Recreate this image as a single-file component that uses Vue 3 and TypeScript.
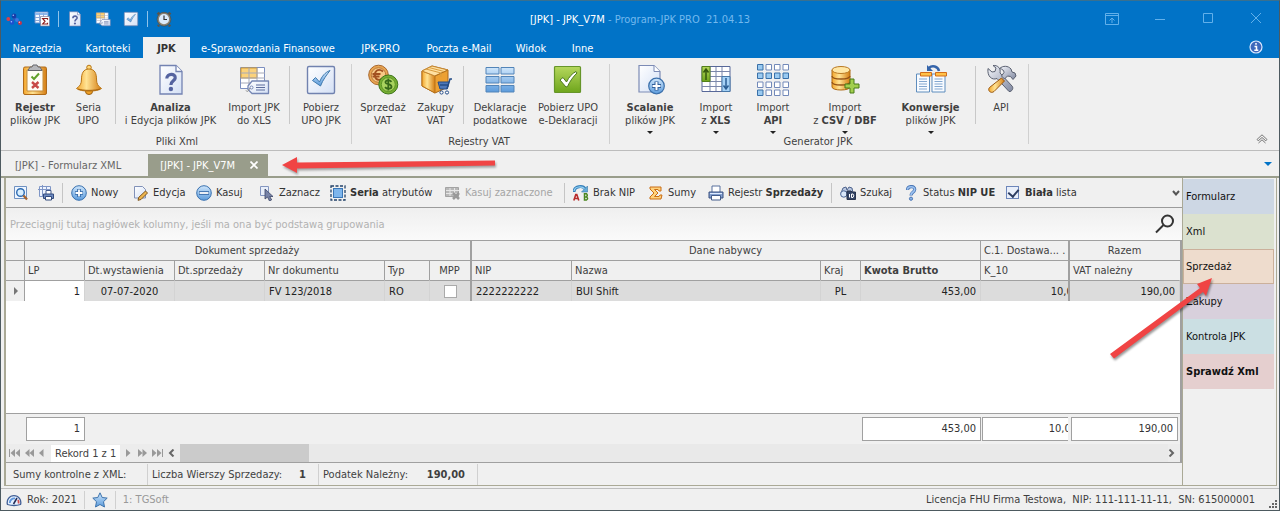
<script setup lang="ts">
import { ref } from 'vue'

interface Run { text: string; bold?: boolean }
interface RibbonItem { icon?: string; lines?: Run[][]; width?: number; menu?: boolean; separator?: boolean }
interface RibbonGroup { caption: string; items: RibbonItem[] }
interface ToolItem { icon?: string; text?: Run[]; width?: number; disabled?: boolean; separator?: boolean; label?: string }

const quick = [
  { icon: 'molecule', width: 28, label: 'Menu' },
  { icon: 'sumtable', width: 24, label: 'Sumy' },
  { separator: true },
  { icon: 'docq', width: 28, label: 'Analiza' },
  { icon: 'tabletag', width: 28, label: 'Import' },
  { icon: 'checkbox', width: 24, label: 'UPO' },
  { separator: true },
  { icon: 'clock', width: 34, label: 'Zegar' },
]

const menu = [
  { text: 'Narzędzia', width: 72 },
  { text: 'Kartoteki', width: 70 },
  { text: 'JPK', width: 47 },
  { text: 'e-Sprawozdania Finansowe', width: 156 },
  { text: 'JPK-PRO', width: 69 },
  { text: 'Poczta e-Mail', width: 88 },
  { text: 'Widok', width: 56 },
  { text: 'Inne', width: 47 },
]
const activeMenu = ref('JPK')

const groups: RibbonGroup[] = [
  {
    caption: 'Pliki Xml',
    items: [
      { icon: 'clipboard', width: 60, lines: [[{ text: 'Rejestr', bold: true }], [{ text: 'plików JPK' }]] },
      { icon: 'bell', width: 47, lines: [[{ text: 'Seria' }], [{ text: 'UPO' }]] },
      { separator: true },
      { icon: 'docq', width: 103, lines: [[{ text: 'Analiza', bold: true }], [{ text: 'i Edycja plików JPK' }]] },
      { icon: 'tabletag', width: 64, lines: [[{ text: 'Import JPK' }], [{ text: 'do XLS' }]] },
      { separator: true },
      { icon: 'checkbox', width: 56, lines: [[{ text: 'Pobierz' }], [{ text: 'UPO JPK' }]] },
    ],
  },
  {
    caption: 'Rejestry VAT',
    items: [
      { icon: 'coins', width: 56, lines: [[{ text: 'Sprzedaż' }], [{ text: 'VAT' }]] },
      { icon: 'boxcart', width: 49, lines: [[{ text: 'Zakupy' }], [{ text: 'VAT' }]] },
      { separator: true },
      { icon: 'bluegrid', width: 66, lines: [[{ text: 'Deklaracje' }], [{ text: 'podatkowe' }]] },
      { icon: 'greencheck', width: 70, lines: [[{ text: 'Pobierz UPO' }], [{ text: 'e-Deklaracji' }]] },
    ],
  },
  {
    caption: 'Generator JPK',
    items: [
      { icon: 'docplus', width: 74, menu: true, lines: [[{ text: 'Scalanie', bold: true }], [{ text: 'plików JPK' }]] },
      { icon: 'xlsgrid', width: 58, menu: true, lines: [[{ text: 'Import' }], [{ text: 'z ' }, { text: 'XLS', bold: true }]] },
      { icon: 'squares', width: 56, menu: true, lines: [[{ text: 'Import' }], [{ text: 'API', bold: true }]] },
      { icon: 'database', width: 88, menu: true, lines: [[{ text: 'Import' }], [{ text: 'z ' }, { text: 'CSV / DBF', bold: true }]] },
      { icon: 'convert', width: 83, menu: true, lines: [[{ text: 'Konwersje', bold: true }], [{ text: 'plików JPK' }]] },
      { separator: true },
      { icon: 'tools', width: 44, lines: [[{ text: 'API' }]] },
    ],
  },
]

const tools: ToolItem[] = [
  { icon: 'preview', width: 25, label: 'Podgląd' },
  { icon: 'gridprint', width: 24, label: 'Drukuj' },
  { separator: true },
  { icon: 'plus', width: 62, text: [{ text: 'Nowy' }] },
  { icon: 'edit', width: 63, text: [{ text: 'Edycja' }] },
  { icon: 'minus', width: 63, text: [{ text: 'Kasuj' }] },
  { icon: 'cursor', width: 71, text: [{ text: 'Zaznacz' }] },
  { icon: 'select', width: 115, text: [{ text: 'Seria', bold: true }, { text: ' atrybutów' }] },
  { icon: 'deltable', width: 119, disabled: true, text: [{ text: 'Kasuj zaznaczone' }] },
  { separator: true },
  { icon: 'ab', width: 75, text: [{ text: 'Brak NIP' }] },
  { icon: 'sigma', width: 60, text: [{ text: 'Sumy' }] },
  { icon: 'printer', width: 123, text: [{ text: 'Rejestr ' }, { text: 'Sprzedaży', bold: true }] },
  { separator: true },
  { icon: 'find', width: 63, text: [{ text: 'Szukaj' }] },
  { icon: 'question', width: 103, text: [{ text: 'Status ' }, { text: 'NIP UE', bold: true }] },
]

const whiteList = ref(true)
const mpp = ref(false)
const columns = [19, 60, 90, 90, 120, 45, 42, 100, 0, 40, 120, 89, 110]
const side = ['Formularz', 'Xml', 'Sprzedaż', 'Zakupy', 'Kontrola JPK', 'Sprawdź Xml']
const activeSide = ref('Sprzedaż')
</script>

<template>
  <div class="window">
    <svg class="defs" aria-hidden="true">
      <defs>
        <linearGradient id="gBlue" x1="0" y1="0" x2="0" y2="1"><stop offset="0" stop-color="#cfe6fb" /><stop offset="1" stop-color="#5b9bdc" /></linearGradient>
        <linearGradient id="gPage" x1="0" y1="0" x2="1" y2="1"><stop offset="0" stop-color="#ffffff" /><stop offset="1" stop-color="#d4e0f5" /></linearGradient>
        <linearGradient id="gGold" x1="0" y1="0" x2="1" y2="0"><stop offset="0" stop-color="#f3a52b" /><stop offset=".4" stop-color="#ffe394" /><stop offset="1" stop-color="#d57d12" /></linearGradient>
        <linearGradient id="gGreen" x1="0" y1="0" x2="0" y2="1"><stop offset="0" stop-color="#b5d75c" /><stop offset="1" stop-color="#6ea51c" /></linearGradient>
        <linearGradient id="gSteel" x1="0" y1="0" x2="1" y2="1"><stop offset="0" stop-color="#f4f6fb" /><stop offset="1" stop-color="#8088a0" /></linearGradient>
      </defs>
      <symbol id="molecule" viewBox="0 0 16 16">
        <path d="M2 8l4 3 3-5 4 6" stroke="#3a55b8" stroke-width="1.400" fill="none" />
        <circle cx="2.300" cy="8" r="1.900" fill="#d8404c" /><circle cx="6" cy="11.500" r="2.300" fill="#1d50d0" /><circle cx="8" cy="5" r="2.400" fill="#173da8" /><circle cx="11" cy="9" r="1.900" fill="#3c76e4" /><circle cx="14" cy="12" r="2" fill="#c83348" />
        <circle cx="7.300" cy="4.200" r=".8" fill="#9fc0ff" /><circle cx="5.400" cy="10.700" r=".8" fill="#9fc0ff" /><circle cx="13.400" cy="11.300" r=".7" fill="#ffc0c6" />
      </symbol>
      <symbol id="sumtable" viewBox="0 0 16 16">
        <path d="M1 1h13v11H1z" fill="#f6f9ff" stroke="#6a8fcc" /><path d="M1 2h13v2H1z" fill="#8db8ee" /><path d="M1 6.500h13M1 9.500h13M5.500 2v10M9.500 2v10" stroke="#8ba8d8" />
        <path d="M6.500 5.500h9v9.500h-9z" fill="#fff" stroke="#7d7d9a" stroke-width=".7" /><path d="M13.500 8.800V7.500H8.700l2.300 2.800-2.300 2.700h4.800v-1.300" fill="none" stroke="#8c1d1d" stroke-width="1.200" />
      </symbol>
      <symbol id="docq" viewBox="0 0 32 32">
        <path d="M5 1.500h16l6 6V30H5z" fill="url(#gPage)" stroke="#7383b2" stroke-width="1.300" /><path d="M21 1.500v6h6" fill="#fff" stroke="#7383b2" stroke-width="1.300" />
        <path d="M11.800 14.500c0-5.500 9-5.500 8.400-.5-.3 3-4.300 2.800-4.300 7" fill="none" stroke="#5463a0" stroke-width="3.200" /><circle cx="15.900" cy="25" r="2.200" fill="#5463a0" />
      </symbol>
      <symbol id="tabletag" viewBox="0 0 32 32">
        <path d="M2.500 3.500h24v21h-24z" fill="#fff" stroke="#7c8fc0" /><path d="M3 4h16v10H3z" fill="#fbd27b" stroke="#d49b33" /><path d="M3 9h24M11 4v20M19 4v20M3 14h24M3 19h24" stroke="#a6a9b8" />
        <path d="M10 22l4-5h16.500v12.500H14l-4-4z" fill="url(#gPage)" stroke="#7586b4" stroke-width="1.300" stroke-linejoin="round" /><circle cx="13.500" cy="23.500" r="1.500" fill="#fff" stroke="#7586b4" /><path d="M18 21h9M18 23.500h9M18 26h9" stroke="#5d6c9c" /><path d="M12 24c-2 4-3 4-4 2.500" stroke="#888" fill="none" />
      </symbol>
      <symbol id="checkbox" viewBox="0 0 32 32">
        <rect x="2.500" y="2.500" width="27" height="27" rx="1.500" fill="url(#gPage)" stroke="#7182af" stroke-width="1.400" /><path d="M7.500 16.500l3-3 4 4.500C17 12 20 8.500 25 6.500c-3 4-7 9-9.500 15.500z" fill="url(#gBlue)" stroke="#4079ad" />
      </symbol>
      <symbol id="clock" viewBox="0 0 16 16">
        <path d="M3 14l-1 1.500M13 14l1 1.500M1.500 3.500l2-2M12.500 1.500l2 2" stroke="#5c5448" stroke-width="2.400" /><circle cx="8" cy="8.200" r="6" fill="#dcebfb" stroke="#8a8171" stroke-width="1.800" /><circle cx="8" cy="8.200" r="6.900" fill="none" stroke="#4d463c" stroke-width=".6" /><path d="M8 4.500v4h3" stroke="#333" stroke-width="1.200" fill="none" />
      </symbol>
      <symbol id="clipboard" viewBox="0 0 32 32">
        <rect x="4.500" y="3" width="23" height="27.500" rx="1.500" fill="url(#gGold)" stroke="#af6a18" /><path d="M8 6h16v21H8z" fill="#fffdf6" stroke="#c58b39" /><path d="M9 6.500h14l-2-3.500h-2l-1-2h-4l-1 2h-2z" fill="#b5b6ba" stroke="#66666c" />
        <path d="M12.500 12.500l2.500 2.500 5-5.500" stroke="#62a12c" stroke-width="2" fill="none" /><path d="M13 18l6.500 6M19.500 18L13 24" stroke="#c84a47" stroke-width="2.400" />
      </symbol>
      <symbol id="bell" viewBox="0 0 32 32">
        <circle cx="16" cy="3.500" r="2.300" fill="#ffd879" stroke="#b87513" /><ellipse cx="16" cy="27.500" rx="3.500" ry="3" fill="#f0a126" stroke="#9b5f10" />
        <path d="M16 5c-6 0-7.500 5-7.500 10 0 5-1.500 7-5 9.500 4 3.500 21 3.500 25 0-3.500-2.500-5-4.500-5-9.500 0-5-1.500-10-7.500-10z" fill="url(#gGold)" stroke="#ba7614" /><path d="M5 25c5 1.800 17 1.800 22 0" stroke="#a8630c" fill="none" />
      </symbol>
      <symbol id="coins" viewBox="0 0 32 32">
        <circle cx="11.500" cy="11" r="9.800" fill="#eaa652" stroke="#a8672c" /><circle cx="11.500" cy="11" r="7.300" fill="#f7c987" stroke="#bc7b3b" /><path d="M16 7.500c-5-4-9 0-8 5 1 4 5 4 7.500 2M5.500 10h8M5.500 12.500h7" stroke="#a35120" stroke-width="1.800" fill="none" />
        <circle cx="21.300" cy="20.500" r="9.500" fill="#76ad32" stroke="#3f761b" /><circle cx="21.300" cy="20.500" r="7" fill="#a9d35f" stroke="#5d9626" /><path d="M24.500 17.800c-2-2.400-6.500-1.500-6 .8.400 2 5.800 1.300 6 4 .1 2.500-4.500 3-6.500.5M21.300 14.500v12" stroke="#37691a" stroke-width="1.800" fill="none" />
      </symbol>
      <symbol id="boxcart" viewBox="0 0 32 32">
        <path d="M2 7l10-5 16 4v17l-13 6-13-7z" fill="#eca032" stroke="#aa681a" /><path d="M2 7l13 5v17L2 22z" fill="url(#gGold)" stroke="#b8721b" /><path d="M2 7l10-5 16 4-13 6z" fill="#ffe0a0" stroke="#c68934" /><path d="M15 12l13-6" stroke="#b4711c" /><path d="M6 5l15 4v4M9 3.500l15 4" stroke="#d89b3d" fill="none" />
        <path d="M18 18h11l-2 7h-7z" fill="#4f78b9" stroke="#244c87" /><path d="M27 25l3-10h2M20 21h8" stroke="#244c87" stroke-width="1.500" fill="none" /><circle cx="21.500" cy="28.500" r="1.600" fill="#fff" stroke="#244c87" /><circle cx="27" cy="28.500" r="1.600" fill="#fff" stroke="#244c87" />
      </symbol>
      <symbol id="bluegrid" viewBox="0 0 32 32">
        <path d="M2 3.500h13v6.500H2zM17 3.500h13v6.500H17zM2 12.500h13V19H2zM17 12.500h13V19H17zM2 21.500h13V28H2zM17 21.500h13V28H17z" fill="url(#gBlue)" stroke="#5284b8" />
      </symbol>
      <symbol id="greencheck" viewBox="0 0 32 32">
        <rect x="2.500" y="2.500" width="26" height="26" rx="1" fill="url(#gGreen)" stroke="#669529" stroke-width="1.200" /><path d="M8 16l3-2.500 3.500 4.500C17 13 20 9.500 24 7.500l1 1.500c-4 4-7 8-9.500 13.500L14 23z" fill="#fff" stroke="#4c781e" />
      </symbol>
      <symbol id="docplus" viewBox="0 0 32 32">
        <path d="M5 1.500h15l6 6V28H5z" fill="url(#gPage)" stroke="#7c8bb5" stroke-width="1.200" /><path d="M20 1.500v6h6" fill="#fff" stroke="#7c8bb5" /><circle cx="22.500" cy="22" r="7.800" fill="url(#gBlue)" stroke="#3c70ab" stroke-width="1.200" /><path d="M22.500 17.500v9M18 22h9" stroke="#315f9b" stroke-width="4" /><path d="M22.500 18v8M18.500 22h8" stroke="#fff" stroke-width="2" />
      </symbol>
      <symbol id="xlsgrid" viewBox="0 0 32 32">
        <path d="M2 2.500h28v25H2z" fill="#fff" stroke="#586899" /><path d="M2 7.500h28M2 12.500h28M2 17.500h28M2 22.500h28M10 3v24M16 3v24M22 3v24" stroke="#7b87aa" /><path d="M2 2.500h8v15H2z" fill="url(#gGreen)" stroke="#53801b" /><path d="M22 12.500h8v15h-8z" fill="#a6d2f6" stroke="#4778a8" /><path d="M6 16V6M3.500 8.500L6 5l2.500 3.500" stroke="#33570e" stroke-width="1.500" fill="none" /><path d="M26 14v10M23.500 21.500L26 25l2.500-3.500" stroke="#2b5e94" stroke-width="1.500" fill="none" />
      </symbol>
      <symbol id="squares" viewBox="0 0 32 32">
        <path d="M9 .5h5.500V6H9zM17.500.5H23V6h-5.500zM26 .5h5.500V6H26zM.5 18H6v5.500H.5zM9 18h5.500v5.500H9zM17.500 18H23v5.500h-5.500zM26 18h5.500v5.500H26zM9 26h5.500v5.500H9zM17.500 26H23v5.500h-5.500zM26 26h5.500v5.500H26z" fill="#fff" stroke="#7289b9" /><path d="M.5.5H6V6H.5zM.5 9H6v5.500H.5zM9 9h5.500v5.500H9zM17.500 9H23v5.500h-5.500zM26 9h5.500v5.500H26zM.5 26H6v5.500H.5z" fill="#9acaf1" stroke="#3970a8" />
      </symbol>
      <symbol id="database" viewBox="0 0 32 32">
        <path d="M3 6v17c0 4 18 4 18 0V6z" fill="url(#gGold)" stroke="#ad6a15" /><path d="M3 12c0 4 18 4 18 0M3 18c0 4 18 4 18 0" stroke="#955316" stroke-width="1.300" fill="none" /><ellipse cx="12" cy="6" rx="9" ry="3.500" fill="#ffe6a4" stroke="#b97822" /><path d="M21 15h4v5h5v4h-5v5h-4v-5h-5v-4h5z" fill="#a2cf4e" stroke="#487b19" />
      </symbol>
      <symbol id="convert" viewBox="0 0 32 32">
        <path d="M1.500 10h13v18h-13zM17 10h13v18H17z" fill="#f8fbff" stroke="#5f8dbd" /><path d="M4 15h8M4 17.500h8M4 20h8M4 22.500h8M4 25h8M19.500 15h8M19.500 17.500h8M19.500 20h8M19.500 22.500h8M19.500 25h8" stroke="#83a7d0" /><path d="M5.500 8.500h11V12h-11zM20.500 8.500h11V12h-11z" fill="#ffc148" stroke="#d36c19" /><path d="M24 7C23 2 17 1 14 4" stroke="#3564aa" stroke-width="2.500" fill="none" /><path d="M12 1v6h6z" fill="#3564aa" />
      </symbol>
      <symbol id="tools" viewBox="0 0 32 32">
        <path d="M3 4.500l4 3.500 3-.5L11 4 8 1.500c5-.5 8 3 7 7.500L27 22c2 2 0 6-3 5.500L12 14.500c-5 2-10-2-9-10z" fill="url(#gSteel)" stroke="#5a6070" stroke-linejoin="round" />
        <path d="M14.500 4.500C18 1.500 23 1.500 26 5l1 3 3 1 1 3-3 3.500-2.500-3-3-.5-3 3-3-3 2.500-3.500c0-2-1.500-3.500-4.500-4z" fill="url(#gSteel)" stroke="#5a6070" stroke-linejoin="round" />
        <path d="M16.500 14l3 3L9 27.500c-3 2.500-7-1-4.500-4z" fill="url(#gGold)" stroke="#995812" />
      </symbol>
      <symbol id="preview" viewBox="0 0 16 16"><path d="M1.500 1.500h12v12h-12z" fill="#eef5ff" stroke="#6f91c1" /><circle cx="7.500" cy="7.500" r="3.800" fill="#d9efff" stroke="#2d6bb2" stroke-width="1.400" /><path d="M10.500 10.500l3.500 4" stroke="#a7642e" stroke-width="2.300" /></symbol>
      <symbol id="gridprint" viewBox="0 0 16 16"><path d="M1.500 1.500h11v10h-11z" fill="#eef4ff" stroke="#7f96c6" /><path d="M0 4.500h12M4.500 0v12M8.500 1v7" stroke="#7f96c6" /><path d="M8 5.500h5V10H8z" fill="#fff" stroke="#40588b" /><path d="M5.500 9h10v4.500h-10z" fill="#6f8cc2" stroke="#334b7d" /><path d="M7.500 11.500h6V15h-6z" fill="#fff" stroke="#334b7d" /></symbol>
      <symbol id="plus" viewBox="0 0 16 16"><circle cx="8" cy="8" r="7.300" fill="url(#gBlue)" stroke="#3971af" /><path d="M8 4v8M4 8h8" stroke="#3166a5" stroke-width="3.600" /><path d="M8 4.500v7M4.500 8h7" stroke="#fff" stroke-width="1.800" /></symbol>
      <symbol id="minus" viewBox="0 0 16 16"><circle cx="8" cy="8" r="7.300" fill="url(#gBlue)" stroke="#3971af" /><path d="M3 8h10" stroke="#3166a5" stroke-width="3.600" /><path d="M3.500 8h9" stroke="#fff" stroke-width="1.800" /></symbol>
      <symbol id="edit" viewBox="0 0 16 16"><path d="M1.500 1.500h8l3 3V13h-11z" fill="url(#gPage)" stroke="#8191b8" /><path d="M14.500 8l-6.500 6.500-3 .8.800-3L12.500 6z" fill="#edb54e" stroke="#7e551e" /></symbol>
      <symbol id="cursor" viewBox="0 0 16 16"><path d="M1.500 1.500h8v9h-8z" fill="#e9effa" stroke="#8496c0" /><path d="M6 4v10l2.500-2 2 4 2.200-1.200-2-3.300H14z" fill="#7783a8" stroke="#3b4566" stroke-width=".8" /></symbol>
      <symbol id="select" viewBox="0 0 16 16"><rect x="3.500" y="3.500" width="9" height="9" fill="#7db5ec" stroke="#3976b7" /><rect x="1" y="1" width="14" height="14" fill="none" stroke="#234268" stroke-width="1.300" stroke-dasharray="3 1.500" /></symbol>
      <symbol id="deltable" viewBox="0 0 16 16"><path d="M.5 2.500h13v9H.5z" fill="#b8b8b8" stroke="#a3a3a3" /><path d="M1 5.500h13M1 8.500h13M5 3v8M9.500 3v8" stroke="#e6e6e6" /><path d="M8 8l6 6M14 8l-6 6" stroke="#999" stroke-width="2.600" /></symbol>
      <symbol id="ab" viewBox="0 0 16 16"><path d="M1 7C1 1 10 0 12 4" stroke="#3680bb" stroke-width="3" fill="none" /><path d="M1 6C2 1 9 1 12 4" stroke="#97d3f4" stroke-width="1.200" fill="none" /><path d="M14.500 1v6h-6z" fill="#62abd9" stroke="#3b78a8" stroke-width=".6" /><path d="M.800 15.500l2-6h1l2 6M2 13.500h3" stroke="#b82c2c" stroke-width="1.600" fill="none" /><path d="M11.500 8.800h2q1.500 1.500 0 3.200 2.200 1.500 0 3h-2zM11.500 12h2.500" stroke="#4a861e" stroke-width="1.500" fill="none" /></symbol>
      <symbol id="sigma" viewBox="0 0 16 16"><path d="M2 2h11v4h-2l-1-1.500H6.500L10 8l-3.500 3.500H11L12 10h2l-1 4H2v-2l4-4-4-4z" fill="#ffd27c" stroke="#c96d14" /></symbol>
      <symbol id="printer" viewBox="0 0 16 16"><path d="M4 1h8v7H4z" fill="#fff" stroke="#58709d" /><path d="M1 7h14v6H1z" fill="#83a0d0" stroke="#384f7e" /><path d="M3.500 10.500h9V15h-9z" fill="#fff" stroke="#435b8a" /><path d="M2 8.500h12" stroke="#ddeaff" /></symbol>
      <symbol id="find" viewBox="0 0 16 16"><path d="M1 8l2-5 3-1 1 3 2-3 3 1 1 5z" fill="#b8c6df" stroke="#50658e" /><circle cx="3.800" cy="9" r="3.200" fill="#d9e8fa" stroke="#4a6594" /><path d="M7 6h4l1 1h3.500v7.500H7z" fill="#334466" stroke="#28344d" /><path d="M9.500 9v3.500M11.500 9v3.500h1.500q1.500-1.700 0-3.500z" stroke="#fff" fill="none" /></symbol>
      <symbol id="question" viewBox="0 0 16 16"><path d="M4.500 5c0-4.500 7.500-4.500 7.200-.5C11.500 7.500 8 7 8 10.500" fill="none" stroke="#4a76b5" stroke-width="3.200" /><path d="M4.500 4.800c0-4 7.200-4 7.200-.3C11.500 7.500 8 7 8 10" fill="none" stroke="#9cc3f2" stroke-width="1.600" /><circle cx="8" cy="13.700" r="1.600" fill="#8db5e8" stroke="#4a76b5" /></symbol>
      <symbol id="gauge" viewBox="0 0 16 16"><path d="M1.500 12.500a6.800 6.800 0 1 1 13 0q-6.500 2-13 0z" fill="#e4f0ff" stroke="#415f96" stroke-width="1.300" /><path d="M3.800 11a4.500 4.500 0 0 1 5.200-4.500" fill="none" stroke="#5f96dc" stroke-width="1.800" /><path d="M12 8q1 1.500.5 3.500" fill="none" stroke="#d45050" stroke-width="1.800" /><path d="M7.500 12l3.500-6" stroke="#222b55" stroke-width="1.500" /></symbol>
      <symbol id="star" viewBox="0 0 16 16"><path d="M8 .8l2.200 4.700 5 .6-3.700 3.600 1 5.300L8 12.500 3.500 15l1-5.300L.8 6.100l5-.6z" fill="url(#gBlue)" stroke="#3c72ac" /></symbol>
      <symbol id="info" viewBox="0 0 16 16"><circle cx="8" cy="8" r="6" fill="#3d68bb" stroke="#dce8ff" stroke-width="1.200" /><path d="M8 4v1.800M6.500 7.500h2v3.500M6.300 11.300h4" stroke="#fff" stroke-width="1.500" fill="none" /></symbol>
    </svg>

    <header class="titlebar">
      <div class="quick">
        <template v-for="(q, i) in quick" :key="i">
          <i v-if="q.separator" class="quick-sep"></i>
          <button v-else class="quick-btn" :aria-label="q.label" :style="{ width: q.width + 'px' }"><svg class="i16"><use :href="'#' + q.icon" /></svg></button>
        </template>
      </div>
      <div class="title">[JPK] - JPK_V7M <span>- Program-JPK PRO&nbsp; 21.04.13</span></div>
      <div class="controls">
        <button aria-label="Wstążka"><svg width="14" height="12"><path d="M.5.500h13v11H.5zM.5 2.500h13M7 10V5M4.500 7.500L7 5l2.500 2.500" /></svg></button>
        <button aria-label="Minimalizuj"><svg width="10" height="11"><path d="M0 6.500h10" /></svg></button>
        <button aria-label="Maksymalizuj"><svg width="10" height="10"><path d="M.5.500h9v9h-9z" /></svg></button>
        <button aria-label="Zamknij"><svg width="10" height="10"><path d="M0 0l10 10M10 0L0 10" /></svg></button>
      </div>
    </header>

    <nav class="menu">
      <button v-for="m in menu" :key="m.text" :class="{ active: m.text === activeMenu }" :style="{ width: m.width + 'px' }" @click="activeMenu = m.text">{{ m.text }}</button>
      <button class="info" aria-label="Informacje"><svg class="i16"><use href="#info" /></svg></button>
    </nav>

    <section class="ribbon">
      <div v-for="g in groups" :key="g.caption" class="group">
        <div class="group-items">
          <template v-for="(it, i) in g.items" :key="i">
            <i v-if="it.separator" class="ribbon-sep"></i>
            <button v-else class="ribbon-btn" :style="{ width: it.width + 'px' }">
              <svg class="i32"><use :href="'#' + it.icon" /></svg>
              <span v-for="(line, l) in it.lines" :key="l" class="line"><span v-for="(r, k) in line" :key="k" :class="{ bold: r.bold }">{{ r.text }}</span></span>
              <i v-if="it.menu" class="caret"></i>
            </button>
          </template>
        </div>
        <div class="caption">{{ g.caption }}</div>
      </div>
      <button class="collapse" aria-label="Zwiń wstążkę"><svg width="12" height="10" viewBox="0 0 12 10"><path d="M1 5.500L6 .8l5 4.700-1.200 1.300L6 3.500 2.200 6.800zM2.500 9L6 5.800 9.500 9" fill="none" stroke="#777" /></svg></button>
    </section>

    <div class="doctabs">
      <button class="doctab">[JPK] - Formularz XML</button>
      <button class="doctab current">[JPK] - JPK_V7M <svg width="8" height="8"><path d="M.5.500l7 7M7.500.500l-7 7" stroke="#fff" stroke-width="1.700" /></svg></button>
      <i class="tablist"></i>
      <svg class="arrow-tab" width="220" height="24" viewBox="0 0 220 24" aria-hidden="true"><path d="M2 12L17 4v5.500L215 7.500v5L17 15.500V20z" fill="#f04444" /></svg>
    </div>

    <main class="workspace">
      <div class="document">
        <div class="toolbar">
          <template v-for="(t, i) in tools" :key="i">
            <i v-if="t.separator" class="tool-sep"></i>
            <button v-else class="tool" :disabled="t.disabled" :aria-label="t.label" :style="{ width: t.width + 'px' }">
              <svg class="i16"><use :href="'#' + t.icon" /></svg>
              <span v-if="t.text"><span v-for="(r, k) in t.text" :key="k" :class="{ bold: r.bold }">{{ r.text }}</span></span>
            </button>
          </template>
          <label class="tool check"><input v-model="whiteList" type="checkbox" /><span><b>Biała</b> lista</span></label>
          <button class="more" aria-label="Więcej"><svg width="8" height="6"><path d="M1 1l3 3.500L7 1" fill="none" stroke="#555" stroke-width="2" /></svg></button>
        </div>
        <div class="grouping">
          <span>Przeciągnij tutaj nagłówek kolumny, jeśli ma ona być podstawą grupowania</span>
          <button aria-label="Szukaj"><svg width="20" height="20"><circle cx="12.500" cy="7" r="5.500" fill="none" stroke="#333" stroke-width="2" /><path d="M8.500 11L1 18.500" stroke="#333" stroke-width="2" /></svg></button>
        </div>

        <div class="rows">
          <table class="grid">
            <colgroup><col v-for="(w, i) in columns" :key="i" :style="{ width: w ? w + 'px' : 'auto' }" /></colgroup>
            <thead>
              <tr class="bands"><th></th><th colspan="6" class="band-end">Dokument sprzedaży</th><th colspan="4">Dane nabywcy</th><th class="band-end cut">C.1. Dostawa... .</th><th>Razem</th></tr>
              <tr><th></th><th>LP</th><th>Dt.wystawienia</th><th>Dt.sprzedaży</th><th>Nr dokumentu</th><th>Typ</th><th class="band-end mid">MPP</th><th>NIP</th><th>Nazwa</th><th>Kraj</th><th><b>Kwota Brutto</b></th><th class="band-end">K_10</th><th>VAT należny</th></tr>
            </thead>
            <tbody>
              <tr>
                <td class="marker"><i></i></td><td class="num focus">1</td><td class="mid">07-07-2020</td><td></td><td>FV 123/2018</td><td>RO</td>
                <td class="band-end mid"><input v-model="mpp" type="checkbox" aria-label="MPP" /></td>
                <td>2222222222</td><td>BUI Shift</td><td class="mid">PL</td><td class="num">453,00</td><td class="band-end clip"><span>10,00</span></td><td class="num">190,00</td>
              </tr>
            </tbody>
          </table>
        </div>

        <table class="grid totals">
          <colgroup><col v-for="(w, i) in columns" :key="i" :style="{ width: w ? w + 'px' : 'auto' }" /></colgroup>
          <tbody><tr>
            <td></td><td><div class="sum">1</div></td><td colspan="8"></td><td><div class="sum">453,00</div></td><td class="clip"><div class="sum open"><span>10,00</span></div></td><td><div class="sum last">190,00</div></td>
          </tr></tbody>
        </table>

        <div class="navigator">
          <button aria-label="Pierwszy"><svg width="11" height="8"><path d="M.5 0v8" stroke="#999" /><path d="M6 0v8L1.500 4zM11 0v8L6.500 4z" /></svg></button>
          <button aria-label="Poprzednia strona"><svg width="9" height="8"><path d="M4.500 0v8L0 4zM9 0v8L4.500 4z" /></svg></button>
          <button class="step" aria-label="Poprzedni"><svg width="5" height="8"><path d="M4.500 0v8L0 4z" /></svg></button>
          <span class="record">Rekord 1 z 1</span>
          <button class="step" aria-label="Następny"><svg width="5" height="8"><path d="M0 0v8l4.500-4z" /></svg></button>
          <button aria-label="Następna strona"><svg width="9" height="8"><path d="M0 0v8l4.500-4zM4.500 0v8L9 4z" /></svg></button>
          <button aria-label="Ostatni"><svg width="11" height="8"><path d="M0 0v8l4.500-4zM5 0v8l4.500-4z" /><path d="M10.500 0v8" stroke="#999" /></svg></button>
          <button aria-label="W lewo"><svg width="7" height="8"><path d="M5.500.500L2 4l3.500 3.500" class="chev" /></svg></button>
          <div class="track"><i></i></div>
          <button aria-label="W prawo"><svg width="7" height="8"><path d="M1.500.500L5 4 1.500 7.500" class="chev" /></svg></button>
        </div>

        <div class="checks">
          <span class="c1">Sumy kontrolne z XML:</span>
          <span class="c2">Liczba Wierszy Sprzedazy: <b>1</b></span>
          <span class="c3">Podatek Należny: <b>190,00</b></span>
        </div>
      </div>

      <nav class="side">
        <button v-for="(s, i) in side" :key="s" :class="['side-' + i, { chosen: s === activeSide, bold: i === 5 }]" @click="activeSide = s">{{ s }}</button>
        <svg class="arrow-side" width="110" height="86" viewBox="0 0 110 86" aria-hidden="true"><path d="M104 3L98 21l-3-4L6 83.500 2 79 92 13l-3-4z" fill="#f04444" /></svg>
      </nav>
    </main>

    <footer class="status">
      <span class="cell year"><svg class="i16"><use href="#gauge" /></svg>Rok: 2021</span>
      <span class="cell"><svg class="i16"><use href="#star" /></svg></span>
      <span class="cell firm">1: TGSoft</span>
      <span class="licence">Licencja FHU Firma Testowa,&nbsp; NIP: 111-111-11-11,&nbsp; SN: 615000001</span>
      <svg class="grip" width="8" height="8"><path d="M6 0h2v2H6zM3 3h2v2H3zM6 3h2v2H6zM0 6h2v2H0zM3 6h2v2H3zM6 6h2v2H6z" fill="#666" /></svg>
    </footer>
  </div>
</template>

<style>
body { background: #efefef; }
</style>

<style scoped>
* { box-sizing: border-box; }
.window { display: flex; flex-direction: column; min-height: 100vh; border: 1px solid #4d5a60; border-top-color: #39708f; background: #f0f0f0; color: #3f3f3f; font: 11px/13px "DejaVu Sans Condensed", "Noto Sans", sans-serif; overflow: hidden; }
.defs { position: absolute; width: 0; height: 0; }
button { padding: 0; border: 0; background: none; color: inherit; font: inherit; }
b, .bold { font-weight: 700; }
svg { flex: none; }
.i16 { width: 16px; height: 16px; }
.i32 { width: 32px; height: 32px; }

.titlebar { display: grid; grid-template-columns: 1fr auto 1fr; align-items: center; height: 36px; background: #0173c7; }
.quick { display: flex; align-items: center; padding-left: 5px; }
.quick-btn { display: flex; }
.quick-sep { width: 1px; height: 16px; margin-right: 8px; background: #8fc3ea; }
.title { color: #fff; white-space: nowrap; }
.title span { color: #73b9ee; }
.controls { display: flex; justify-content: flex-end; }
.controls button { display: flex; justify-content: center; width: 48px; }
.controls button:last-child { width: 47px; }
.controls path { fill: none; stroke: #62b0ea; }

.menu { display: flex; height: 21px; background: #0173c7; color: #fff; }
.menu button { padding-top: 2px; white-space: nowrap; }
.menu .active { background: #f0f0f0; color: #333; font-weight: 700; }
.menu .info { display: flex; margin: 0 15px 0 auto; }

.ribbon { display: flex; height: 93px; padding: 6px 0; border-bottom: 1px solid #bdbdbd; }
.group { display: flex; flex-direction: column; padding: 0 3px; border-right: 1px solid #d0d0d0; }
.group:nth-child(1) { padding: 0 2px 0 4px; }
.group:nth-child(2) { padding-right: 6px; }
.group:nth-child(3) { padding-right: 5px; }
.group-items { display: flex; flex: none; height: 71px; }
.ribbon-btn { display: flex; flex-direction: column; align-items: center; white-space: nowrap; }
.ribbon-btn .i32 { margin-bottom: 5px; }
.line { white-space: pre; }
.caret { margin-top: 4px; border: 3px solid transparent; border-top-color: #222; border-bottom: 0; }
.ribbon-sep { width: 1px; height: 58px; margin: 2px 3px; background: #c8c8c8; }
.caption { text-align: center; }
.collapse { display: flex; margin: auto 11px 0 auto; }

.doctabs { position: relative; display: flex; align-items: flex-end; height: 27px; border-bottom: 2px solid #999d8b; }
.doctab { height: 22px; padding: 0 14px; white-space: nowrap; color: #666; }
.current { display: flex; align-items: center; gap: 15px; margin-left: 13px; padding: 0 10px 0 12px; background: #999d8b; color: #fff; }
.tablist { margin: 0 7px 10px auto; border: 4px solid transparent; border-top-color: #0173c7; border-bottom: 0; }
.arrow-tab { position: absolute; left: 279px; top: 2px; filter: drop-shadow(1px 2px 1px #0005); }

.workspace { display: flex; flex: 1; margin: 0 2px 0 3px; border: 1px solid #aaa996; border-top: 0; border-left-width: 2px; }
.document { display: flex; flex: 1; flex-direction: column; min-width: 0; border-right: 1px solid #aaa996; }
.toolbar { display: flex; align-items: center; height: 30px; padding-left: 7px; border-bottom: 1px solid #9b9b9b; }
.tool { display: flex; align-items: center; gap: 4px; white-space: pre; color: #333; }
.tool:disabled { color: #a5a5a5; }
.tool-sep { width: 1px; height: 20px; margin-right: 8px; background: #c5c5c5; }
.check { gap: 6px; }
input { appearance: none; width: 13px; height: 13px; margin: 0; border: 1px solid #aaa; background: #fff; }
.check input { position: relative; border-color: #6d86ba; background: #e9effa; }
.check input:checked::after { content: ""; position: absolute; left: 3px; top: 0; width: 5px; height: 8px; border: solid #2c3c60; border-width: 0 2px 2px 0; transform: rotate(40deg); }
.more { display: flex; margin: 0 2px 0 auto; }
.grouping { display: flex; align-items: center; justify-content: space-between; height: 32px; padding: 0 7px 0 4px; background: linear-gradient(#efefef, #fafafa); color: #b2b2b2; }
.grouping button { display: flex; }

.rows { flex: 1; border-right: 2px solid #a0a0a0; background: #fff; }
.grid { width: 100%; table-layout: fixed; border-collapse: separate; border-spacing: 0; }
.grid th { height: 20px; padding: 0 4px 0 3px; border-top: 1px solid #a0a0a0; border-right: 1px solid #a0a0a0; background: #f0f0f0; font-weight: 400; text-align: left; white-space: nowrap; }
.grid th:last-child { border-right: 0; }
.grid .bands th { text-align: center; }
.grid .bands .cut { padding: 0 0 0 3px; overflow: hidden; text-align: left; }
.grid tbody td { height: 21px; padding: 0 4px; border-top: 1px solid #a0a0a0; border-right: 1px solid #d3d3d3; background: #dcdcdc; color: #222; white-space: nowrap; }
.grid .band-end, .rows .grid tbody .band-end { border-right: 2px solid #a0a0a0; }
.grid .mid { text-align: center; }
.grid .mid input { display: block; margin: 0 auto; }
.grid .num { text-align: right; }
.rows .grid .focus { background: #fff; }
.rows .grid .marker { border-right-color: #a0a0a0; background: #f0f0f0; }
.marker i { display: block; width: 0; margin-left: 4px; border: 4px solid transparent; border-left-color: #777; border-right: 0; }
.clip { overflow: hidden; }
.clip span { display: block; width: 94px; text-align: right; }

.totals { height: 31px; border-top: 1px solid #a0a0a0; border-right: 2px solid #a0a0a0; }
.grid.totals tbody td { height: 30px; padding: 0 0 0 1px; border: 0; background: #f0f0f0; }
.sum { height: 24px; padding-right: 4px; border: 1px solid #a0a0a0; background: #fff; line-height: 22px; text-align: right; color: #333; }
.open { width: 86px; border-right: 0; padding: 0; overflow: hidden; }
.last { margin-right: 2px; }

.navigator { display: flex; align-items: center; height: 19px; padding-left: 3px; border-bottom: 1px solid #a0a0a0; border-right: 2px solid #a0a0a0; background: #ececec; }
.navigator button { display: flex; padding: 0 3px 0 0; margin-right: 2px; }
.navigator .step { margin-right: 4px; }
.navigator path { fill: #999; }
.navigator .chev { fill: none; stroke: #666; stroke-width: 2; }
.record { margin-right: 6px; padding: 2px 4px; background: #fff; white-space: nowrap; }
.track { flex: 1; align-self: stretch; background: #e9e9e9; }
.track i { display: block; width: 129px; height: 100%; background: #cbcbcb; }

.checks { display: flex; align-items: center; height: 22px; }
.checks span { display: flex; justify-content: space-between; padding: 4px 12px 4px 4px; border-right: 1px solid #d0d0d0; white-space: nowrap; }
.checks .c1 { width: 142px; padding-left: 7px; }
.checks .c2 { width: 171px; }
.checks .c3 { width: 159px; }

.side { position: relative; width: 91px; margin-right: 2px; padding-top: 1px; color: #111; }
.side > button { display: block; width: 100%; height: 35px; padding-left: 3px; text-align: left; }
.side-0 { background: #cdd7e4; }
.side-1 { background: #dbe1cf; }
.side-2 { background: #eedccd; }
.side-3 { background: #d8d0dc; }
.side-4 { background: #cbdfe3; }
.side-5 { background: #e5cfcf; }
.side > .chosen { padding-left: 2px; border: 1px solid #cbb09b; }
.arrow-side { position: absolute; right: 56px; top: 97px; filter: drop-shadow(1px 2px 1px #0006); }

.status { display: flex; align-items: center; height: 22px; margin-top: 2px; border-top: 1px solid #bdbdbd; }
.cell { display: flex; align-items: center; height: 18px; padding: 0 7px; border-right: 1px solid #d0d0d0; }
.year { gap: 5px; padding-left: 5px; }
.firm { border: 0; color: #999; }
.licence { margin-left: auto; white-space: nowrap; }
.grip { align-self: flex-end; margin: 0 2px 2px 14px; }
</style>
